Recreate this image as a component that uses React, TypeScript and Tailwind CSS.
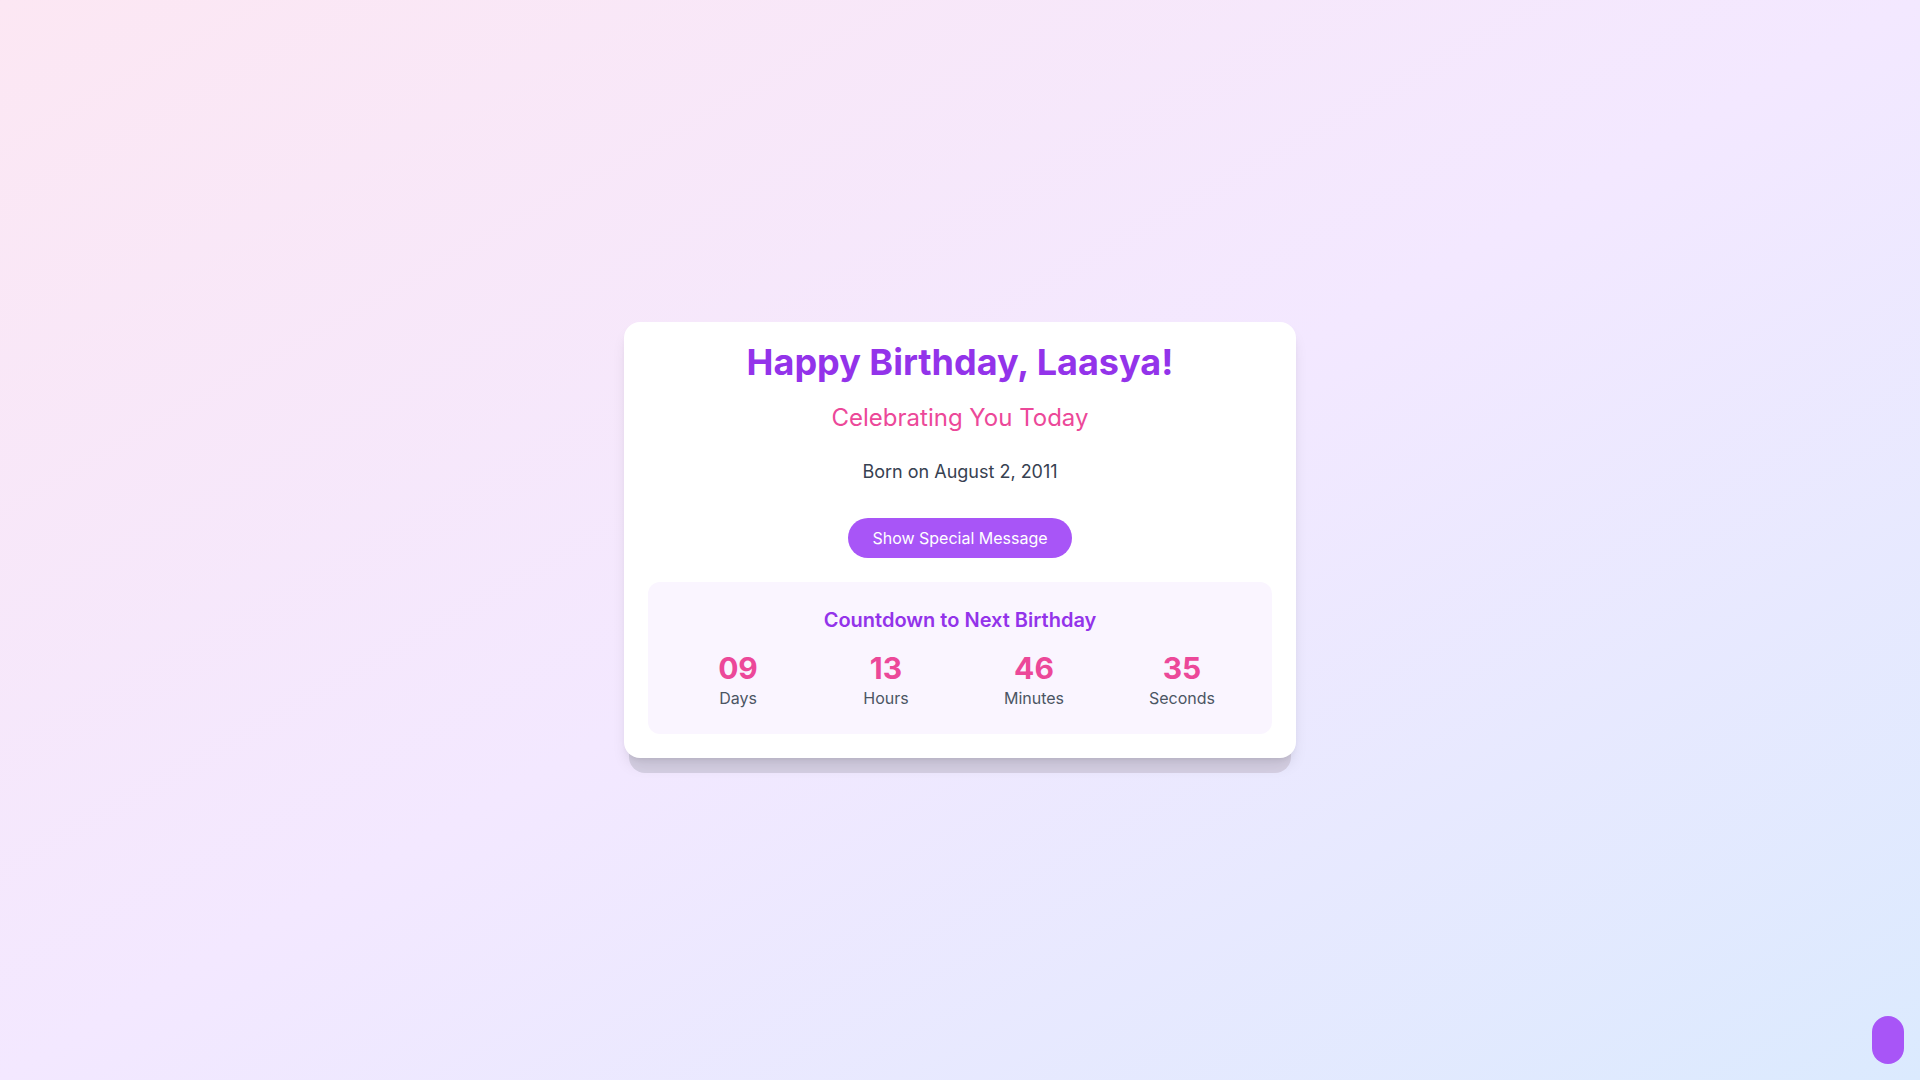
import React from "react";

const countdown = [
  { value: "09", label: "Days" },
  { value: "13", label: "Hours" },
  { value: "46", label: "Minutes" },
  { value: "35", label: "Seconds" },
];

export default function App() {
  return (
    <div
      className="min-h-screen w-full bg-linear-to-br from-[#fce7f3] via-[#f3e8ff] to-[#dbeafe] flex items-center justify-center"
      style={{ fontFamily: "Inter, 'Noto Sans', sans-serif" }}
    >
      <div className="relative w-full max-w-2xl">
        {/* stacked layer behind the card */}
        <div className="absolute inset-x-[5px] -bottom-[15px] h-full rounded-2xl bg-[#d6d0e4]" />

        <div className="relative bg-white rounded-2xl shadow-lg px-6 pt-5 pb-6 text-center">
          <h1 className="text-4xl font-bold text-[#9333ea] mb-5">
            Happy Birthday, Laasya!
          </h1>
          <p className="text-2xl text-[#ec4899] mb-6">Celebrating You Today</p>
          <p className="text-lg text-[#374151] mb-8">Born on August 2, 2011</p>

          <button className="bg-[#a855f7] text-white text-base px-6 py-2 rounded-full mb-6">
            Show Special Message
          </button>

          <div className="bg-[#faf5ff] rounded-xl p-6">
            <h2 className="text-xl font-semibold text-[#9333ea] mb-4">
              Countdown to Next Birthday
            </h2>
            <div className="grid grid-cols-4 gap-4">
              {countdown.map((c) => (
                <div key={c.label} className="flex flex-col items-center">
                  <span className="text-3xl font-bold text-[#ec4899]">
                    {c.value}
                  </span>
                  <span className="text-base text-[#4b5563]">{c.label}</span>
                </div>
              ))}
            </div>
          </div>
        </div>
      </div>

      {/* floating music button */}
      <button className="fixed bottom-4 right-4 w-8 h-12 rounded-full bg-[#a855f7]" />
    </div>
  );
}
